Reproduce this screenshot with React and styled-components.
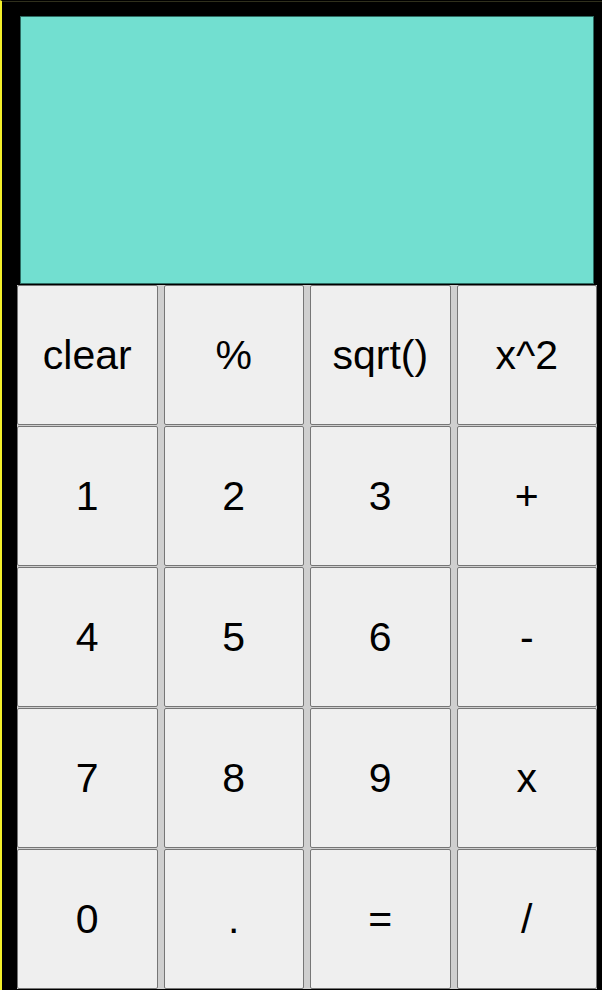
import React from 'react';
import styled, { createGlobalStyle } from 'styled-components';

const GlobalStyle = createGlobalStyle`
  html, body {
    margin: 0;
    padding: 0;
    background: #000;
  }
`;

const Frame = styled.div`
  min-height: 990px;
  box-sizing: border-box;
  border-left: 2px solid #f2ef2a;
  border-top: 1px solid #000;
  padding-top: 0;
  background: #000;
  position: relative;
  &::before {
    content: '';
    display: block;
    height: 1px;
    background: #2f2f1c;
  }
`;

const Display = styled.div`
  box-sizing: border-box;
  margin: 14px 0 0 18px;
  width: 574px;
  height: 268px;
  background: #72dfd0;
  border: 1px solid #2d6b62;
`;

const Keypad = styled.div`
  margin: 1px 0 0 15px;
  width: 580px;
  display: grid;
  grid-template-columns: repeat(4, 1fr);
  grid-auto-rows: 140px;
  column-gap: 6px;
  row-gap: 1px;
  background: #cfcfcf;
`;

const Key = styled.button`
  box-sizing: border-box;
  margin: 0;
  padding: 0;
  border: 1px solid #767676;
  border-radius: 2px;
  background: #efefef;
  color: #000;
  font-family: 'Liberation Sans', Arial, sans-serif;
  font-size: 41px;
  cursor: pointer;
  display: flex;
  align-items: center;
  justify-content: center;
`;

const keys = [
  'clear', '%', 'sqrt()', 'x^2',
  '1', '2', '3', '+',
  '4', '5', '6', '-',
  '7', '8', '9', 'x',
  '0', '.', '=', '/',
];

export default function App() {
  return (
    <>
      <GlobalStyle />
      <Frame>
        <Display />
        <Keypad>
          {keys.map((k) => (
            <Key key={k}>{k}</Key>
          ))}
        </Keypad>
      </Frame>
    </>
  );
}
